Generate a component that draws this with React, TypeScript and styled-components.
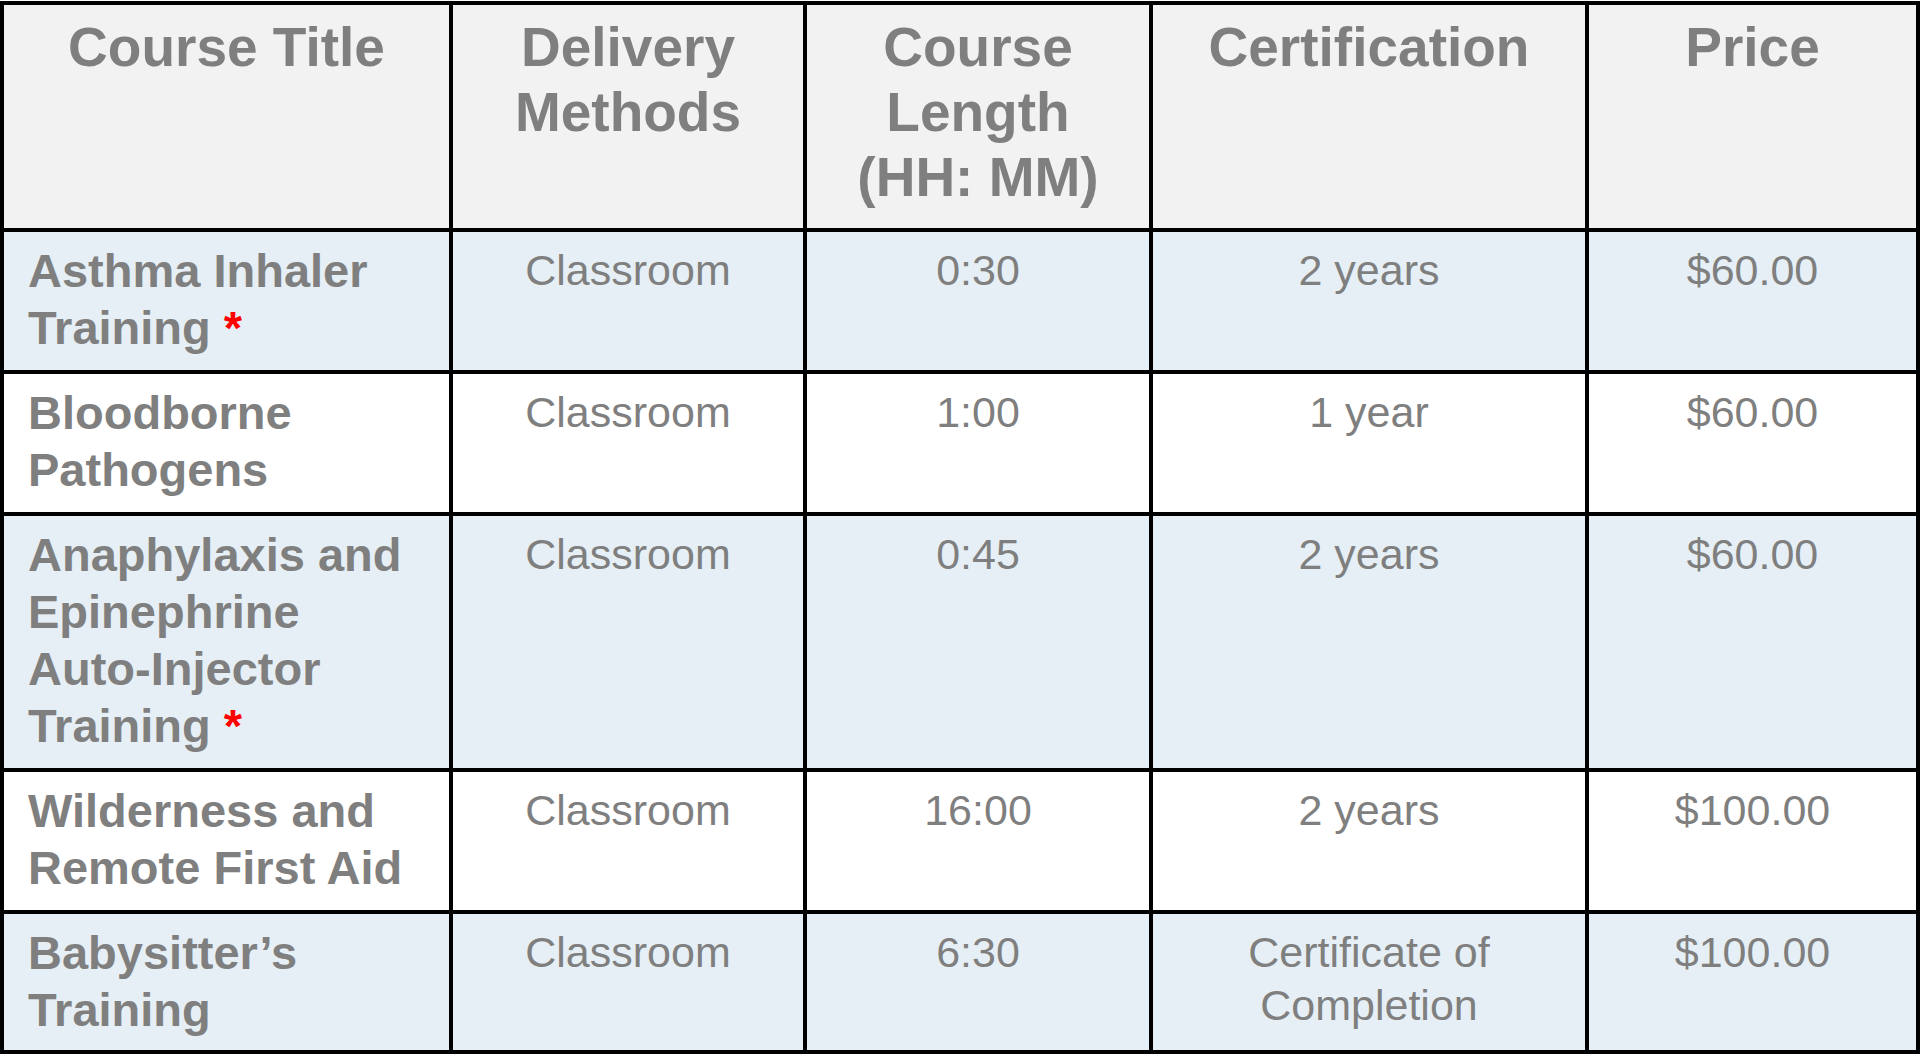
import React from 'react';
import styled, {createGlobalStyle} from "styled-components";

const GlobalStyle = createGlobalStyle`
  html, body {
    margin: 0;
    padding: 0;
    background: #FFFFFF;
  }

  body {
    font-family: "Liberation Sans", Arial, sans-serif;
  }
`

const Page = styled.div`
  width: 1920px;
  padding-top: 1px;
`

const CourseTable = styled.table`
  width: 1920px;
  table-layout: fixed;
  border-collapse: collapse;
  border: 4px solid #000000;
`

const HeadRow = styled.tr`
  height: 227px;
  background: #F2F2F2;
`

const HeadCell = styled.th`
  border: 4px solid #000000;
  padding: 10px 20px;
  vertical-align: top;
  text-align: center;

  font-style: normal;
  font-weight: 700;
  font-size: 55px;
  line-height: 65px;
  color: #7F7F7F;
`

interface RowProps {
    $tint: boolean;
    $height: number;
}

const Row = styled.tr<RowProps>`
  height: ${(props) => props.$height}px;
  background: ${(props) => props.$tint ? "#E6EFF5" : "#FFFFFF"};
`

const TitleCell = styled.td`
  border: 4px solid #000000;
  padding: 10px 24px;
  vertical-align: top;
  text-align: left;

  font-style: normal;
  font-weight: 700;
  font-size: 47px;
  line-height: 57px;
  color: #7F7F7F;
`

const Cell = styled.td`
  border: 4px solid #000000;
  padding: 12px 20px;
  vertical-align: top;
  text-align: center;

  font-style: normal;
  font-weight: 400;
  font-size: 43px;
  line-height: 53px;
  color: #7F7F7F;
`

const Star = styled.span`
  color: #FF0000;
  font-weight: 700;
`

interface Course {
    title: string,
    starred: boolean,
    delivery: string,
    length: string,
    certification: string,
    price: string,
    height: number
}

const courses: Course[] = [
    {title: "Asthma Inhaler Training", starred: true, delivery: "Classroom", length: "0:30", certification: "2 years", price: "$60.00", height: 142},
    {title: "Bloodborne Pathogens", starred: false, delivery: "Classroom", length: "1:00", certification: "1 year", price: "$60.00", height: 142},
    {title: "Anaphylaxis and Epinephrine Auto-Injector Training", starred: true, delivery: "Classroom", length: "0:45", certification: "2 years", price: "$60.00", height: 256},
    {title: "Wilderness and Remote First Aid", starred: false, delivery: "Classroom", length: "16:00", certification: "2 years", price: "$100.00", height: 142},
    {title: "Babysitter\u2019s Training", starred: false, delivery: "Classroom", length: "6:30", certification: "Certificate of Completion", price: "$100.00", height: 140},
];

function App() {
    return (
        <Page>
            <GlobalStyle/>
            <CourseTable>
                <colgroup>
                    <col style={{width: 449}}/>
                    <col style={{width: 354}}/>
                    <col style={{width: 346}}/>
                    <col style={{width: 436}}/>
                    <col style={{width: 331}}/>
                </colgroup>
                <thead>
                <HeadRow>
                    <HeadCell>Course Title</HeadCell>
                    <HeadCell>Delivery Methods</HeadCell>
                    <HeadCell>Course Length (HH: MM)</HeadCell>
                    <HeadCell>Certification</HeadCell>
                    <HeadCell>Price</HeadCell>
                </HeadRow>
                </thead>
                <tbody>
                {courses.map((item, index) => (
                    <Row key={index} $tint={index % 2 === 0} $height={item.height}>
                        <TitleCell>
                            {item.title}
                            {item.starred && <>{"\u00A0"}<Star>*</Star></>}
                        </TitleCell>
                        <Cell>{item.delivery}</Cell>
                        <Cell>{item.length}</Cell>
                        <Cell>{item.certification}</Cell>
                        <Cell>{item.price}</Cell>
                    </Row>
                ))}
                </tbody>
            </CourseTable>
        </Page>
    );
}

export default App;
